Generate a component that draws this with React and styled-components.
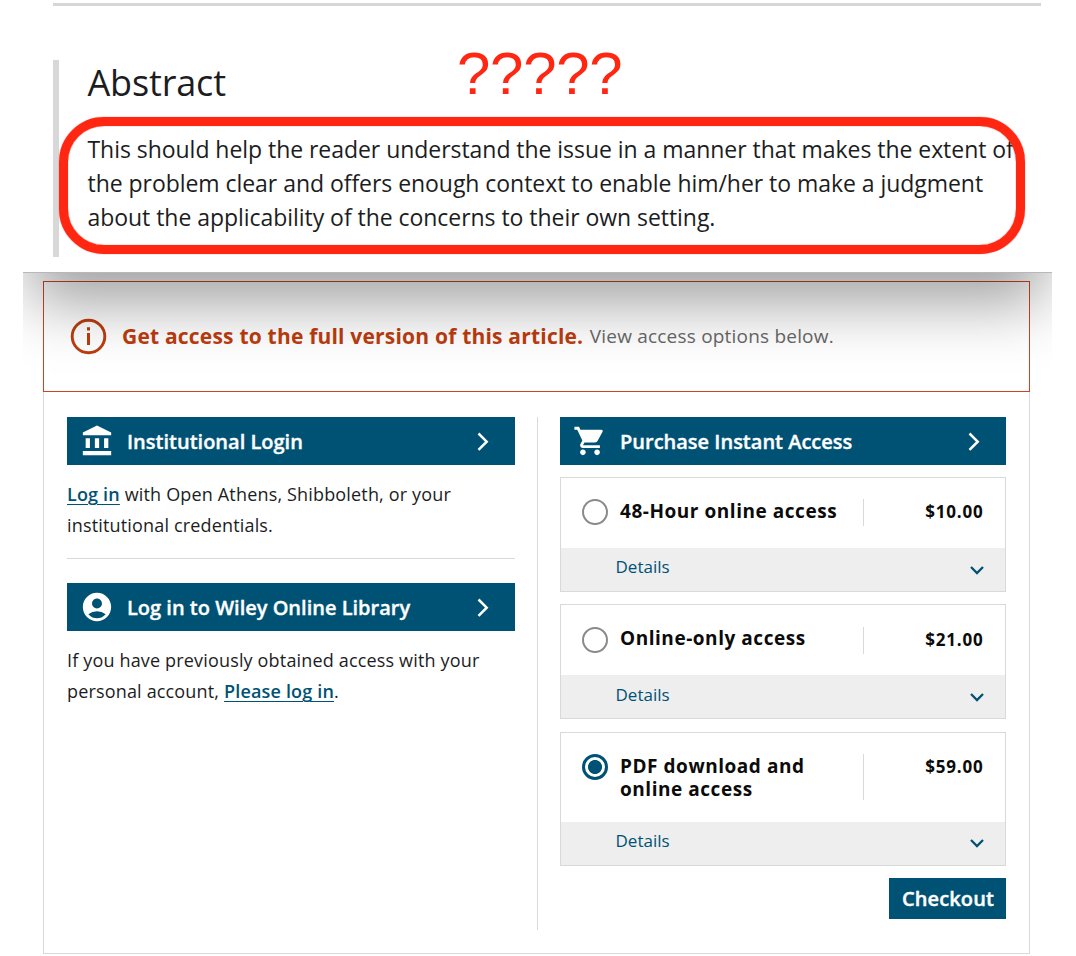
import React, { useState } from "react";
import styled, { createGlobalStyle } from "styled-components";
import {
  MdAccountBalance,
  MdAccountCircle,
  MdShoppingCart,
} from "react-icons/md";

const COLORS = {
  blue: "#005274",
  orange: "#bd3d0f",
  red: "#ff2712",
  line: "#d9d9d9",
  grey: "#eeeeee",
  text: "#1c1d1e",
};

const GlobalStyle = createGlobalStyle`
  * { box-sizing: border-box; }
  body {
    margin: 0;
    background: #fff;
    color: ${COLORS.text};
    font-family: "Open Sans", "Noto Sans", sans-serif;
  }
`;

const Page = styled.div`
  width: 1076px;
  height: 956px;
  overflow: hidden;
  display: flex;
  flex-direction: column;
`;

const Article = styled.section`
  position: relative;
  height: 272px;
  padding: 3px 35px 0 53px;
`;

const Rule = styled.hr`
  height: 3px;
  margin: 0 0 54px;
  border: 0;
  background: #d6d6d6;
`;

const Abstract = styled.div`
  height: 197px;
  padding-left: 28.5px;
  border-left: 6px solid #d8d8d8;
`;

const Title = styled.h1`
  margin: 0;
  font-size: 36px;
  line-height: 46px;
  font-weight: 400;
  letter-spacing: -0.15px;
`;

const Paragraph = styled.p`
  margin: 25.5px 0 0;
  font-size: 23px;
  line-height: 34.3px;
  letter-spacing: -0.045px;
  white-space: nowrap;
`;

const Line = styled.span`
  display: block;
`;

// hand-made marks on top of the abstract
const Marks = styled.span`
  position: absolute;
  top: 39px;
  left: 457px;
  color: ${COLORS.red};
  font-family: "Liberation Sans", Arial, sans-serif;
  font-size: 60px;
  line-height: 70px;
  letter-spacing: -0.3px;
`;

const Outline = styled.div`
  position: absolute;
  top: 117px;
  left: 59px;
  width: 966px;
  height: 137px;
  border: 9px solid ${COLORS.red};
  border-radius: 45px;
  box-shadow: 0 0 1px ${COLORS.red}, inset 0 0 1px ${COLORS.red};
`;

const Access = styled.section`
  position: relative;
  padding: 9px 46px 0 43px;
`;

const Shade = styled.div`
  position: absolute;
  top: 0;
  left: 23px;
  width: 1029px;
  height: 120px;
  overflow: hidden;
  border-top: 1px solid rgba(0, 0, 0, 0.28);
  pointer-events: none;

  &::before {
    content: "";
    position: absolute;
    top: -400px;
    left: 8px;
    right: 8px;
    height: 200px;
    box-shadow: 0 230px 58px rgba(0, 0, 0, 0.37);
  }
`;

const Panel = styled.div`
  height: 673px;
  border: 1px solid ${COLORS.line};
`;

const Notice = styled.div`
  display: flex;
  align-items: center;
  height: 111px;
  margin: -1px -1px 0;
  padding-left: 26px;
  border: 1px solid #cf4320;
  color: ${COLORS.orange};
`;

const NoticeTitle = styled.strong`
  margin: -1px 0 0 15px;
  font-size: 21px;
  font-weight: 700;
  letter-spacing: 0.2px;
  white-space: nowrap;
`;

const NoticeText = styled.span`
  margin: -2px 0 0 6.5px;
  color: #686868;
  font-size: 19px;
  letter-spacing: 0.2px;
  white-space: nowrap;
`;

const Columns = styled.div`
  display: flex;
  padding: 25px 23px 0;
`;

const Login = styled.div`
  width: 471px;
  height: 513px;
  padding-right: 22px;
  border-right: 1px solid ${COLORS.line};
`;

const Purchase = styled.div`
  flex: 1;
  padding-left: 22px;
`;

const Bar = styled.button`
  display: flex;
  align-items: center;
  width: 100%;
  height: 48px;
  padding: 0 22.5px 1px 13px;
  border: 0;
  background: ${COLORS.blue};
  color: #fff;
  font: 600 20px "Open Sans", sans-serif;
  text-align: left;
`;

const BarLabel = styled.span`
  flex: 1;
  margin-left: 13px;
  padding-top: 1px;
  -webkit-text-stroke: 0.35px #fff;
`;

const Hint = styled.p`
  margin: 14px 0 0;
  font-size: 18px;
  line-height: 31.4px;
  letter-spacing: 0.165px;
  white-space: nowrap;
`;

const TextLink = styled.a`
  color: ${COLORS.blue};
  font-weight: 600;
  text-decoration: underline;
  text-decoration-thickness: 1px;
  text-underline-offset: 3px;
`;

const Divider = styled.hr`
  height: 1px;
  margin: 16.2px 0 24px;
  border: 0;
  background: ${COLORS.line};
`;

const Option = styled.div`
  margin-top: 12.2px;
  height: ${({ $tall }) => ($tall ? "134px" : "115px")};
  display: flex;
  flex-direction: column;
  border: 1px solid ${COLORS.line};
`;

const OptionBody = styled.label`
  flex: 1;
  display: flex;
  align-items: flex-start;
  padding: 21.2px 21.5px 0 21px;
`;

const Radio = styled.span`
  width: 26px;
  height: 26px;
  margin-right: 12px;
  border: ${({ $on }) =>
    $on ? `3px solid ${COLORS.blue}` : "2px solid #8a8a8a"};
  border-radius: 50%;
  background: ${({ $on }) =>
    $on
      ? `radial-gradient(circle, ${COLORS.blue} 6.6px, #fff 7.4px)`
      : "#fff"};
`;

const OptionName = styled.span`
  width: 244px;
  min-height: ${({ $tall }) => ($tall ? "46px" : "27px")};
  border-right: 1px solid ${COLORS.line};
  color: #0b0b0b;
  font-size: 19px;
  line-height: 23px;
  font-weight: 700;
  letter-spacing: 0.54px;
  white-space: nowrap;
`;

const OptionLine = styled(Line)`
  height: 23px;
  padding-top: 0.8px;
`;

const Price = styled.span`
  flex: 1;
  color: #0b0b0b;
  font-size: 17px;
  line-height: 25px;
  font-weight: 700;
  letter-spacing: 0.78px;
  text-align: right;
`;

const Details = styled.div`
  display: flex;
  align-items: center;
  justify-content: space-between;
  height: 43px;
  padding: 0 20.5px 0 54.5px;
  background: ${COLORS.grey};
  color: ${COLORS.blue};
  font-size: 17px;
`;

const DetailsLabel = styled.span`
  margin-top: -5.5px;
`;

const Checkout = styled.button`
  display: block;
  width: 117px;
  height: 41px;
  margin: 12px 0 0 auto;
  padding: 0 0 0 1px;
  border: 0;
  background: ${COLORS.blue};
  color: #fff;
  font: 600 20px "Open Sans", sans-serif;
  letter-spacing: 0.1px;
  -webkit-text-stroke: 0.4px #fff;
`;

const InfoIcon = () => (
  <svg width="37" height="37" viewBox="0 0 37 37" fill="none">
    <circle cx="18.5" cy="18.5" r="16.3" stroke={COLORS.orange} strokeWidth="2.9" />
    <path d="M18.5 9.2v3.3M18.5 15v12" stroke={COLORS.orange} strokeWidth="3" />
  </svg>
);

const ChevronRight = () => (
  <svg width="20" height="24" viewBox="0 0 20 24" fill="none">
    <path d="m5.5 4.5 8.2 8.2-8.2 8.2" stroke="#fff" strokeWidth="2.5" />
  </svg>
);

const ChevronDown = () => (
  <svg width="16" height="12" viewBox="0 0 16 12" fill="none">
    <path d="m2 3 6 6 6-6" stroke={COLORS.blue} strokeWidth="2.3" />
  </svg>
);

const OPTIONS = [
  { id: "48h", lines: ["48-Hour online access"], price: "$10.00" },
  { id: "online", lines: ["Online-only access"], price: "$21.00" },
  { id: "pdf", lines: ["PDF download and", "online access"], price: "$59.00" },
];

const App = () => {
  const [selected, setSelected] = useState("pdf");

  return (
    <Page>
      <GlobalStyle />
      <Article>
        <Rule />
        <Abstract>
          <Title>Abstract</Title>
          <Paragraph>
            <Line>
              This should help the reader understand the issue in a manner that
              makes the extent of
            </Line>
            <Line>
              the problem clear and offers enough context to enable him/her to
              make a judgment
            </Line>
            <Line>
              about the applicability of the concerns to their own setting.
            </Line>
          </Paragraph>
        </Abstract>
        <Marks>?????</Marks>
        <Outline />
      </Article>

      <Access>
        <Panel>
          <Notice>
            <InfoIcon />
            <NoticeTitle>
              Get access to the full version of this article.
            </NoticeTitle>
            <NoticeText>View access options below.</NoticeText>
          </Notice>

          <Columns>
            <Login>
              <Bar>
                <MdAccountBalance size={34} />
                <BarLabel>Institutional Login</BarLabel>
                <ChevronRight />
              </Bar>
              <Hint>
                <Line>
                  <TextLink>Log in</TextLink> with Open Athens, Shibboleth, or
                  your
                </Line>
                <Line>institutional credentials.</Line>
              </Hint>
              <Divider />
              <Bar>
                <MdAccountCircle size={34} />
                <BarLabel>Log in to Wiley Online Library</BarLabel>
                <ChevronRight />
              </Bar>
              <Hint>
                <Line>If you have previously obtained access with your</Line>
                <Line>
                  personal account, <TextLink>Please log in</TextLink>.
                </Line>
              </Hint>
            </Login>

            <Purchase>
              <Bar>
                <MdShoppingCart size={34} />
                <BarLabel>Purchase Instant Access</BarLabel>
                <ChevronRight />
              </Bar>
              {OPTIONS.map(({ id, lines, price }) => (
                <Option key={id} $tall={lines.length > 1}>
                  <OptionBody onClick={() => setSelected(id)}>
                    <Radio $on={selected === id} />
                    <OptionName $tall={lines.length > 1}>
                      {lines.map((line) => (
                        <OptionLine key={line}>{line}</OptionLine>
                      ))}
                    </OptionName>
                    <Price>{price}</Price>
                  </OptionBody>
                  <Details>
                    <DetailsLabel>Details</DetailsLabel>
                    <ChevronDown />
                  </Details>
                </Option>
              ))}
              <Checkout>Checkout</Checkout>
            </Purchase>
          </Columns>
        </Panel>
        <Shade />
      </Access>
    </Page>
  );
};

export default App;
